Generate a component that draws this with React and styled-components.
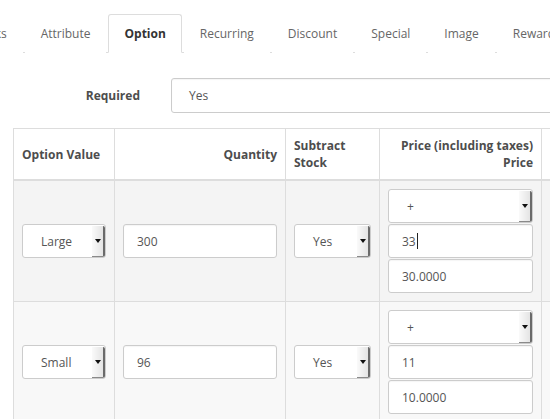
import React from 'react';
import styled, { createGlobalStyle } from 'styled-components';

const GlobalStyle = createGlobalStyle`
  html, body {
    margin: 0;
    padding: 0;
    background: #fff;
  }
  body {
    font-family: "Open Sans", "DejaVu Sans", sans-serif;
    font-size: 12px;
    line-height: 1.42857;
    color: #666;
  }
`;

const Viewport = styled.div`
  width: 550px;
  height: 419px;
  overflow: hidden;
`;

const Page = styled.div`
  width: 760px;
  padding-left: 13px;
  padding-top: 14px;
`;

const Tabs = styled.ul`
  display: flex;
  list-style: none;
  margin: 0 0 0 -51px;
  padding: 0;
  border-bottom: 1px solid #ddd;
`;

const Tab = styled.li`
  margin: 0 2px -1px 0;
  padding: 10px 15px;
  border: 1px solid ${(p) => (p.$active ? '#ddd' : 'transparent')};
  border-bottom-color: ${(p) => (p.$active ? '#fff' : 'transparent')};
  border-radius: 3px 3px 0 0;
  background: #fff;
  color: ${(p) => (p.$active ? '#333' : '#666')};
  font-weight: ${(p) => (p.$active ? 700 : 400)};
  white-space: nowrap;
`;

const FormRow = styled.div`
  display: flex;
  align-items: center;
  margin-top: 25px;
  margin-bottom: 15px;
`;

const Label = styled.label`
  width: 127px;
  text-align: right;
  font-weight: 700;
  color: #4d4d4d;
  padding-right: 31px;
`;

const Field = styled.div`
  flex: ${(p) => (p.$grow ? '1 1 auto' : 'none')};
  box-sizing: border-box;
  height: ${(p) => p.$h || 34}px;
  display: flex;
  align-items: center;
  padding-left: ${(p) => p.$pad || 13}px;
  border: 1px solid #ccc;
  border-radius: 3px;
  background: #fff;
  color: #555;
  box-shadow: inset 0 1px 1px rgba(0, 0, 0, 0.04);
`;

const Caret = styled.span`
  display: inline-block;
  width: 1px;
  height: 16px;
  margin-left: 1px;
  background: #222;
`;

const SelectBox = styled.div`
  flex: none;
  box-sizing: border-box;
  height: 34px;
  display: flex;
  align-items: stretch;
  border: 1px solid #ccc;
  border-radius: 3px;
  background: #fff;
  color: #555;
`;

const SelectText = styled.span`
  flex: 1;
  display: flex;
  align-items: center;
  padding-left: ${(p) => p.$pad || 18}px;
`;

const Arrow = styled.span`
  width: 11px;
  margin: 1px 0 0;
  display: flex;
  align-items: center;
  justify-content: center;
  background: linear-gradient(to right, #fafafa, #e4e4e4);
  border-right: 2px solid #6a6a6a;
  border-bottom: 1px solid #8a8a8a;
  border-radius: 0 2px 2px 0;

  &::after {
    content: '';
    border-left: 3px solid transparent;
    border-right: 3px solid transparent;
    border-top: 4px solid #111;
  }
`;

const Table = styled.table`
  width: 740px;
  table-layout: fixed;
  border-collapse: collapse;
`;

const HeadCell = styled.td`
  padding: 8px;
  border: 1px solid #ddd;
  border-bottom-width: 2px;
  vertical-align: middle;
  font-weight: 700;
  color: #4d4d4d;
  text-align: ${(p) => p.$align || 'left'};
  background: #fff;
`;

const Row = styled.tr`
  background: ${(p) => p.$bg};
`;

const Cell = styled.td`
  padding: 8px;
  border: 1px solid #ddd;
  vertical-align: middle;
`;

const PriceStack = styled.div`
  display: flex;
  flex-direction: column;
  gap: 1px;
`;

const Select = ({ value, pad }) => (
  <SelectBox>
    <SelectText $pad={pad}>{value}</SelectText>
    <Arrow />
  </SelectBox>
);

const tabs = ['Links', 'Attribute', 'Option', 'Recurring', 'Discount', 'Special', 'Image', 'Reward Points', 'Design'];

const rows = [
  { name: 'Large', qty: '300', subtract: 'Yes', price: '33', base: '30.0000', bg: '#f4f4f4', caret: true },
  { name: 'Small', qty: '96', subtract: 'Yes', price: '11', base: '10.0000', bg: '#f8f8f8' },
];

const App = () => (
  <Viewport>
    <GlobalStyle />
    <Page>
      <Tabs>
        {tabs.map((t) => (
          <Tab key={t} $active={t === 'Option'}>{t}</Tab>
        ))}
      </Tabs>

      <FormRow>
        <Label>Required</Label>
        <Field $grow $h={35} $pad={17}>Yes</Field>
      </FormRow>

      <Table>
        <colgroup>
          <col style={{ width: 101 }} />
          <col style={{ width: 171 }} />
          <col style={{ width: 94 }} />
          <col style={{ width: 162 }} />
          <col />
        </colgroup>
        <thead>
          <tr>
            <HeadCell>Option Value</HeadCell>
            <HeadCell $align="right">Quantity</HeadCell>
            <HeadCell>Subtract<br />Stock</HeadCell>
            <HeadCell $align="right">Price (including taxes)<br />Price</HeadCell>
            <HeadCell />
          </tr>
        </thead>
        <tbody>
          {rows.map((r) => (
            <Row key={r.name} $bg={r.bg}>
              <Cell><Select value={r.name} /></Cell>
              <Cell><Field>{r.qty}</Field></Cell>
              <Cell><Select value={r.subtract} /></Cell>
              <Cell>
                <PriceStack>
                  <Select value="+" />
                  <Field>{r.price}{r.caret && <Caret />}</Field>
                  <Field>{r.base}</Field>
                </PriceStack>
              </Cell>
              <Cell />
            </Row>
          ))}
        </tbody>
      </Table>
    </Page>
  </Viewport>
);

export default App;
